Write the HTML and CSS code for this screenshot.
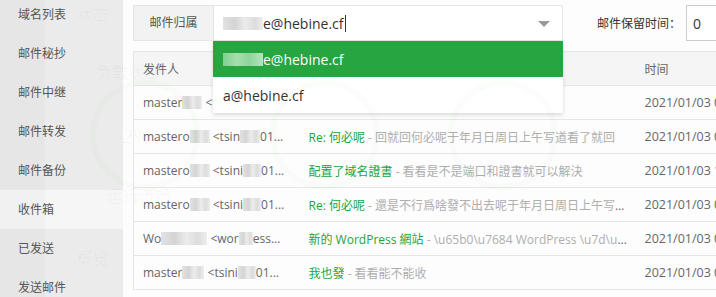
FILE: index.html
```html
<!DOCTYPE html>
<html lang="zh-CN">
<head>
    <meta charset="UTF-8">
    <title>邮局</title>
    <link rel="stylesheet" href="styles.css">
</head>
<body>

    <div class="ghost">
        <span class="g g-state">状态</span>
        <span class="g g-load">负载状态</span>
        <span class="g g-run">运行流畅</span>
        <span class="g g-over">概览</span>
        <span class="g g-pct">2%</span>
        <span class="ring ring-1"></span>
        <span class="ring ring-2"></span>
        <span class="ring ring-3"></span>
    </div>

    <div class="layout">
        <aside class="sidebar">
            <ul class="side-menu">
                <li>域名列表</li>
                <li>邮件秘抄</li>
                <li>邮件中继</li>
                <li>邮件转发</li>
                <li>邮件备份</li>
                <li class="active">收件箱</li>
                <li>已发送</li>
                <li>发送邮件</li>
            </ul>
        </aside>

        <main class="main">
            <div class="toolbar">
                <div class="field">
                    <span class="field-label">邮件归属</span>
                    <div class="select">
                        <span class="select-value"><span class="blur w40"></span>e@hebine.cf<span class="cursor"></span></span>
                        <span class="arrow"></span>
                        <ul class="dropdown">
                            <li class="on"><span class="blur blur-g w40"></span>e@hebine.cf</li>
                            <li>a@hebine.cf</li>
                        </ul>
                    </div>
                </div>
                <div class="keep">
                    <span class="keep-label">邮件保留时间：</span>
                    <input class="keep-input" type="text" value="0">
                </div>
            </div>

            <table class="mail-table">
                <thead>
                    <tr>
                        <th class="col-from">发件人</th>
                        <th class="col-subject">标题</th>
                        <th class="col-time">时间</th>
                    </tr>
                </thead>
                <tbody>
                    <tr>
                        <td class="col-from">master<span class="blur w20"></span> &lt;tsini<span class="blur w18"></span>01...</td>
                        <td class="col-subject"><span class="subject">Re: 何必呢</span><span class="preview"> - 回就回何必呢</span></td>
                        <td class="col-time">2021/01/03 09:51:26</td>
                    </tr>
                    <tr>
                        <td class="col-from">mastero<span class="blur w20"></span> &lt;tsin<span class="blur w20"></span>01...</td>
                        <td class="col-subject"><span class="subject">Re: 何必呢</span><span class="preview"> - 回就回何必呢于年月日周日上午写道看了就回</span></td>
                        <td class="col-time">2021/01/03 09:42:10</td>
                    </tr>
                    <tr>
                        <td class="col-from">mastero<span class="blur w20"></span> &lt;tsini<span class="blur w18"></span>01...</td>
                        <td class="col-subject"><span class="subject">配置了域名證書</span><span class="preview"> - 看看是不是端口和證書就可以解決</span></td>
                        <td class="col-time">2021/01/03 10:05:41</td>
                    </tr>
                    <tr>
                        <td class="col-from">mastero<span class="blur w20"></span> &lt;tsini<span class="blur w18"></span>01...</td>
                        <td class="col-subject"><span class="subject">Re: 何必呢</span><span class="preview"> - 還是不行爲啥發不出去呢于年月日周日上午写道看了</span></td>
                        <td class="col-time">2021/01/03 09:30:02</td>
                    </tr>
                    <tr>
                        <td class="col-from">Wo<span class="blur w46"></span> &lt;wor<span class="blur w14"></span>ess...</td>
                        <td class="col-subject"><span class="subject">新的 WordPress 網站</span><span class="preview"> - \u65b0\u7684 WordPress \u7d\u7ad9</span></td>
                        <td class="col-time">2021/01/03 08:12:55</td>
                    </tr>
                    <tr>
                        <td class="col-from">master<span class="blur w22"></span> &lt;tsini<span class="blur w18"></span>01...</td>
                        <td class="col-subject"><span class="subject">我也發</span><span class="preview"> - 看看能不能收</span></td>
                        <td class="col-time">2021/01/03 08:01:17</td>
                    </tr>
                </tbody>
            </table>
        </main>
    </div>

</body>
</html>
```

FILE: styles.css
```css
* {
    margin: 0;
    padding: 0;
    box-sizing: border-box;
}

html, body {
    width: 716px;
    height: 297px;
    overflow: hidden;
}

body {
    position: relative;
    background: #fdfdfd;
    font-family: "Open Sans", "Noto Sans CJK SC", sans-serif;
    font-size: 12px;
    color: #555;
}

ul {
    list-style: none;
}

/* faint dashboard showing through */
.ghost {
    position: absolute;
    inset: 0;
    z-index: 20;
    pointer-events: none;
}

.g {
    position: absolute;
    font-size: 16px;
    color: rgba(0, 0, 0, 0.035);
    white-space: nowrap;
}

.g-state { left: 77px; top: 1px; }
.g-load { left: 96px; top: 59px; }
.g-run { left: 107px; top: 183px; }
.g-over { left: 77px; top: 245px; }
.g-pct { left: 122px; top: 122px; font-size: 20px; }

.ring {
    position: absolute;
    border-radius: 50%;
    border: 6px solid rgba(32, 165, 58, 0.018);
}

.ring-1 { left: 90px; top: 80px; width: 110px; height: 110px; }
.ring-2 { left: 270px; top: 80px; width: 110px; height: 110px; }
.ring-3 { left: 448px; top: 80px; width: 110px; height: 110px; }

.layout {
    display: flex;
    height: 100%;
}

/* sidebar */
.sidebar {
    width: 123px;
    flex-shrink: 0;
    background: linear-gradient(90deg, #e6e6e6 45px, #ebebeb 45px);
}

.side-menu {
    margin-top: -5px;
}

.side-menu li {
    height: 39px;
    line-height: 39px;
    padding-left: 18px;
    color: #555;
    white-space: nowrap;
}

.side-menu li.active {
    background: linear-gradient(90deg, #f1f1f1 45px, #f6f6f6 45px);
}

/* main */
.main {
    flex: 1;
    padding: 5px 0 0 10px;
    min-width: 0;
}

.toolbar {
    display: flex;
    align-items: center;
    gap: 34px;
    height: 36px;
}

.field {
    display: flex;
    height: 36px;
}

.field-label {
    width: 80px;
    line-height: 34px;
    text-align: center;
    background: #f2f2f2;
    border: 1px solid #e6e6e6;
    border-right: none;
    color: #555;
}

.select {
    position: relative;
    width: 350px;
    border: 1px solid #e6e6e6;
    background: #fff;
}

.select-value {
    display: flex;
    align-items: center;
    height: 34px;
    padding-left: 9px;
    font-size: 14px;
    color: #333;
}

.cursor {
    display: inline-block;
    width: 1px;
    height: 17px;
    margin-left: 1px;
    background: #333;
}

.arrow {
    position: absolute;
    right: 12px;
    top: 15px;
    border-left: 6px solid transparent;
    border-right: 6px solid transparent;
    border-top: 6px solid #999;
}

.dropdown {
    position: absolute;
    left: -1px;
    right: -1px;
    top: 35px;
    z-index: 10;
    background: #fff;
    box-shadow: 0 2px 4px rgba(0, 0, 0, 0.14);
}

.dropdown li {
    display: flex;
    align-items: center;
    height: 36px;
    padding-left: 10px;
    font-size: 14px;
    color: #333;
}

.dropdown li.on {
    background: #26a541;
    color: #fff;
}

.keep {
    display: flex;
    align-items: center;
}

.keep-label {
    color: #333;
    white-space: nowrap;
}

.keep-input {
    width: 80px;
    height: 36px;
    margin-left: 5px;
    padding-left: 6px;
    border: 1px solid #ccc;
    font-family: inherit;
    font-size: 14px;
    color: #333;
}

/* blurred parts of addresses */
.blur {
    display: inline-block;
    height: 13px;
    vertical-align: -2px;
    background: linear-gradient(90deg, #e2e2e2, #d4d4d4 30%, #ececec 55%, #dcdcdc 80%, #eeeeee);
}

.blur-g {
    background: linear-gradient(90deg, #7fd08f, #a6dfb0 35%, #8dd59b 65%, #b5e4bd);
}

.w14 { width: 14px; }
.w18 { width: 18px; }
.w20 { width: 20px; }
.w22 { width: 22px; }
.w40 { width: 40px; }
.w46 { width: 46px; }

/* table */
.mail-table {
    margin-top: 10px;
    width: 640px;
    border-collapse: collapse;
    table-layout: fixed;
    border: 1px solid #e6e6e6;
}

.mail-table th,
.mail-table td {
    height: 34px;
    padding: 0 8px 0 9px;
    text-align: left;
    font-weight: normal;
    white-space: nowrap;
    overflow: hidden;
    text-overflow: ellipsis;
    border-bottom: 1px solid #e6e6e6;
    color: #666;
}

.mail-table th {
    background: #f5f5f5;
    color: #666;
}

.mail-table th.col-subject {
    color: transparent;
}

.col-from { width: 166px; }
.col-subject { width: 336px; }
.col-time { width: 138px; }

.mail-table td.col-time {
    font-size: 12.5px;
    text-overflow: clip;
}

.subject {
    color: #20a53a;
}

.preview {
    color: #aeaeae;
}
```
